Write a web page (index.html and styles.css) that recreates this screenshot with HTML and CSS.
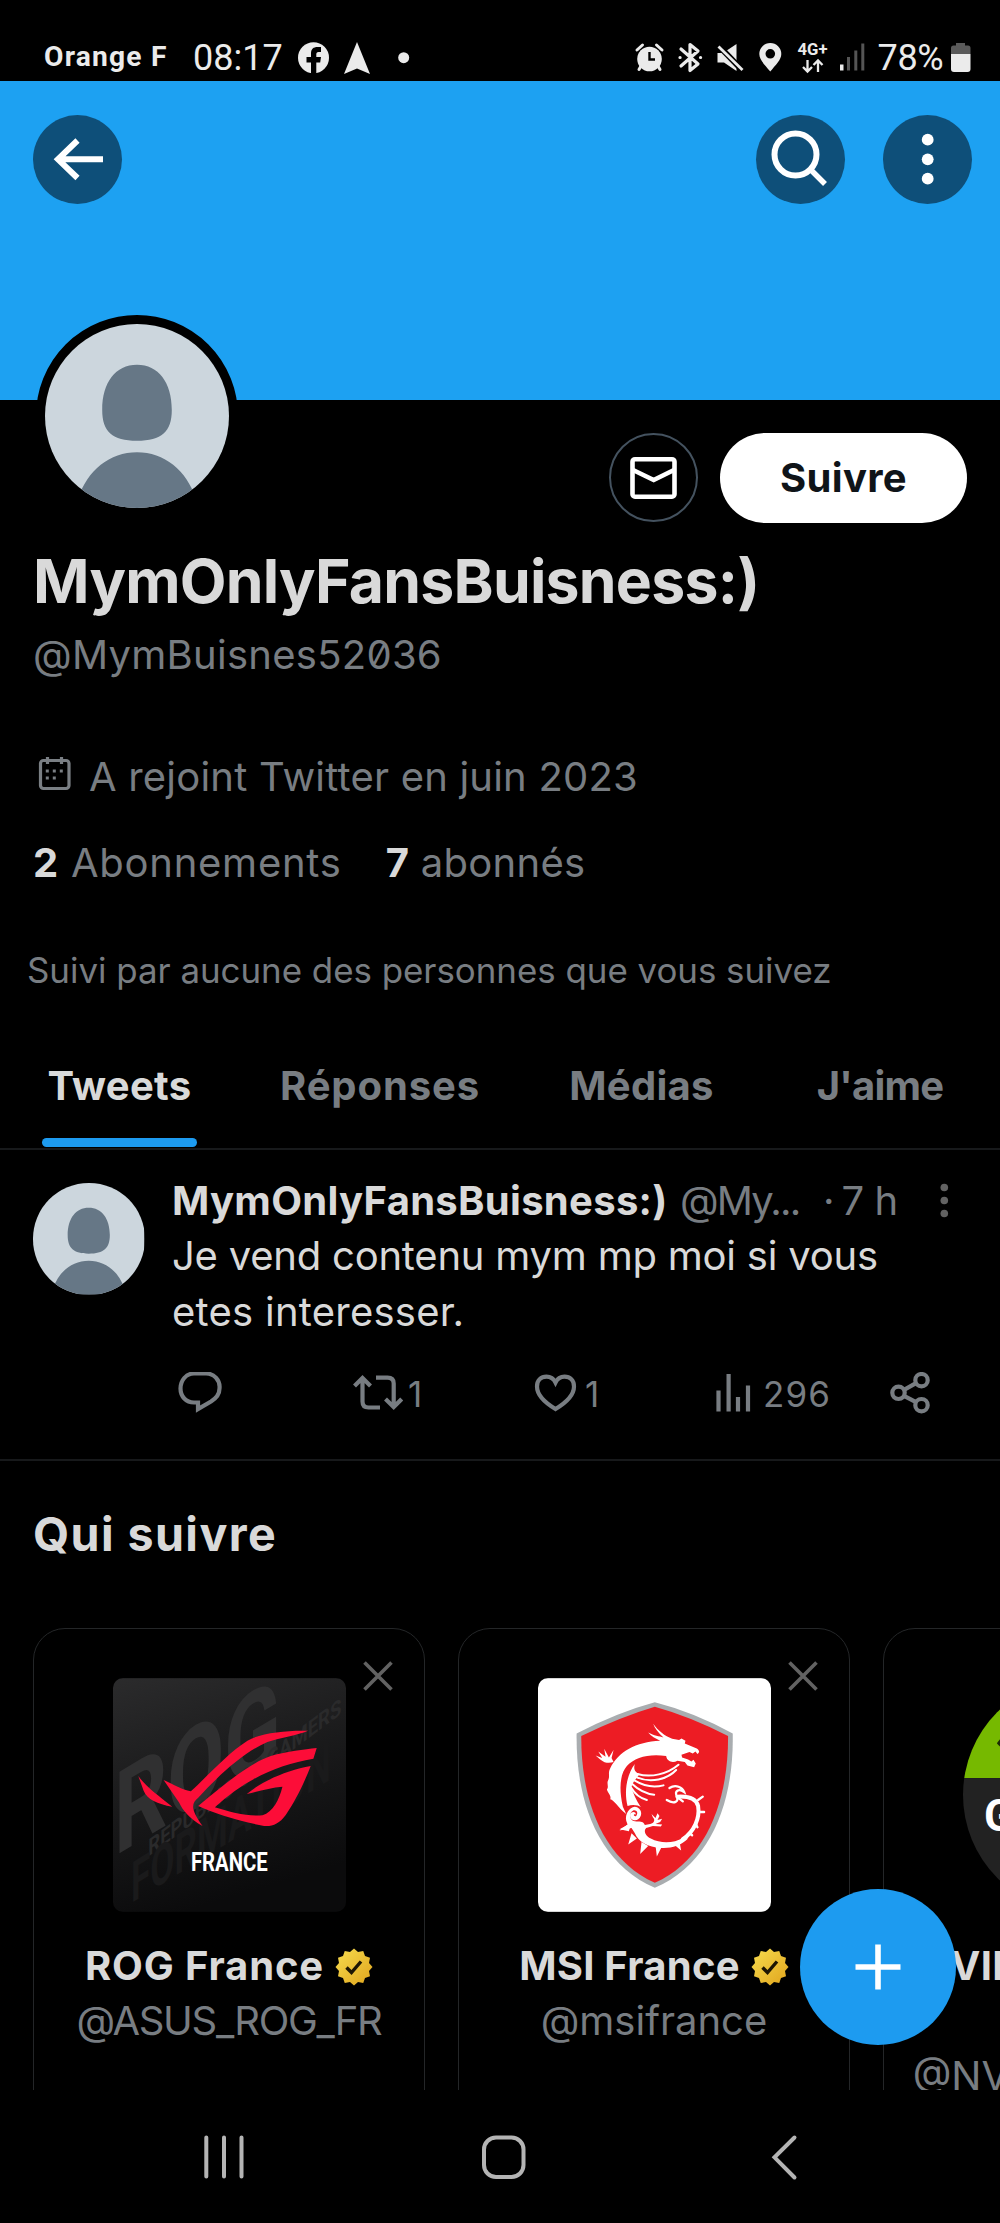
FILE: index.html
```html
<!DOCTYPE html>
<html lang="fr">
<head>
<meta charset="utf-8">
<title>MymOnlyFansBuisness:)</title>
<link rel="stylesheet" href="styles.css">
</head>
<body>
<svg class="defs" width="0" height="0" aria-hidden="true">
  <defs>
    <symbol id="person" viewBox="136 103 550 550">
      <rect x="136" y="103" width="550" height="550" fill="#ccd6dd"/>
      <path fill="#667786" d="M411 225C475 225 515 278 515 360C515 425 485 452 411 452C337 452 307 425 307 360C307 278 347 225 411 225ZM235 625C262 540 330 486 411 486C492 486 560 540 587 625V660H235Z"/>
    </symbol>
    <linearGradient id="gold" x1="0" y1="0" x2="1" y2="1">
      <stop offset="0" stop-color="#f6dc4f"/><stop offset="1" stop-color="#e0a41c"/>
    </linearGradient>
    <symbol id="verified" viewBox="-19 -19 38 38">
      <path fill="url(#gold)" d="M0 -18.500L4 -15L9.250 -16L11 -11L16 -9.250L15 -4L18.500 0L15 4L16 9.250L11 11L9.250 16L4 15L0 18.500L-4 15L-9.250 16L-11 11L-16 9.250L-15 4L-18.500 0L-15 -4L-16 -9.250L-11 -11L-9.250 -16L-4 -15Z"/>
      <path d="M-7.500 0.500L-2.500 5.500L7 -5.500" fill="none" stroke="#1d1503" stroke-width="3.400"/>
    </symbol>
    <symbol id="close" viewBox="0 0 30 30"><path d="M1.500 1.500L28.500 28.500M28.500 1.500L1.500 28.500" stroke="#626262" stroke-width="3.600" fill="none"/></symbol>
  </defs>
</svg>
<div class="screen">
  <header class="status">
    <span class="carrier">Orange F</span>
    <span class="clock">08:17</span>
    <svg class="apps" width="112" height="34" viewBox="298 41 112 34">
      <circle cx="313.500" cy="57.800" r="15.500" fill="#ebebeb"/>
      <path d="M311 74V62.500H306.500V57H311V53.500C311 49 313.500 47 317.500 47H321V52H318.500C316.800 52 316.300 53 316.300 54.300V57H321L320.200 62.500H316.300V74Z" fill="#000"/>
      <path d="M357 42L370 74L357 68.500L344 74Z" fill="#ebebeb"/>
      <circle cx="403.700" cy="57.700" r="5.500" fill="#ebebeb"/>
    </svg>
    <svg class="signals" width="234" height="34" viewBox="634 41 234 34">
      <g fill="#ebebeb" stroke="none">
        <circle cx="650.500" cy="59" r="12.300"/>
        <path d="M650.500 52V59.500H656" fill="none" stroke="#000" stroke-width="2.400"/>
        <path d="M638 50L643.500 45M657.500 45L663 50M642 66L640 69.500M659 66L661 69.500" stroke="#ebebeb" stroke-width="3" stroke-linecap="round"/>
        <path d="M682 49L699 64L691 70.500V44.500L699 51L682 66M681 57.500h.1M701.500 57.500h.1" fill="none" stroke="#ebebeb" stroke-width="3.200" stroke-linecap="round" stroke-linejoin="round"/>
        <path d="M718.500 53H724L737.500 44V71L725 62.500H718.500Z"/>
        <path d="M717.500 43.500L744 71" stroke="#000" stroke-width="6"/>
        <path d="M719.500 46.500L743.500 70" stroke="#ebebeb" stroke-width="2.800"/>
        <path d="M771.300 71.500C766 65 760.300 60 760.300 54A11 11 0 0 1 782.300 54C782.300 60 776.500 65 771.300 71.500ZM771.300 49A4.800 4.800 0 1 0 771.300 58.600A4.800 4.800 0 1 0 771.300 49Z" fill-rule="evenodd"/>
        <text x="798.500" y="55.300" class="net" textLength="30" lengthAdjust="spacingAndGlyphs">4G+</text>
        <path d="M808.500 60V71M804 67L808.500 71.500L813 67M819 72V61M814.500 65L819 60.500L823.500 65" fill="none" stroke="#ebebeb" stroke-width="2.300"/>
        <rect x="841" y="64.500" width="3.500" height="6"/>
        <path d="M848 57h3v13.500h-3zM855.300 50.500h3v20h-3zM862.300 43.500h3v27h-3z" fill="#555"/>
      </g>
    </svg>
    <span class="percent">78%</span>
    <svg class="battery" width="20" height="30" viewBox="952 43 20 30">
      <path d="M957 43H966V45.500H969Q971.500 45.500 971.500 48V54H952V48Q952 45.500 954.500 45.500H957Z" fill="#5a5a5a"/>
      <path d="M952 54H971.500V69Q971.500 72 968.500 72H955Q952 72 952 69Z" fill="#ebebeb"/>
    </svg>
  </header>

  <div class="banner">
    <button class="round">
      <svg width="89" height="89" viewBox="33 115 89 89"><path d="M103 159.300H58M77.500 140.500L58 159.300L77.500 178" fill="none" stroke="#fff" stroke-width="6"/></svg>
    </button>
    <button class="round search">
      <svg width="89" height="89" viewBox="755.500 115 89 89"><circle cx="795" cy="154.500" r="21" fill="none" stroke="#fff" stroke-width="6"/><path d="M810 169.500L824.500 184" stroke="#fff" stroke-width="5.500"/></svg>
    </button>
    <button class="round">
      <svg width="89" height="89" viewBox="883 115 89 89"><g fill="#fff"><circle cx="927.700" cy="139.700" r="5.900"/><circle cx="927.700" cy="159.300" r="5.900"/><circle cx="927.700" cy="178.700" r="5.900"/></g></svg>
    </button>
  </div>

  <section class="profile">
    <div class="profile-top">
      <svg class="portrait"><use href="#person"/></svg>
      <button class="mail">
        <svg width="48" height="44" viewBox="630 456 48 44"><rect x="632.500" y="459.200" width="42" height="37.500" rx="2.500" fill="none" stroke="#fff" stroke-width="4.600"/><path d="M633 470L653.700 480L674 470" fill="none" stroke="#fff" stroke-width="4.600"/></svg>
      </button>
      <button class="follow">Suivre</button>
    </div>
    <h1 class="name">MymOnlyFansBuisness:)</h1>
    <div class="handle">@MymBuisnes52036</div>
    <div class="joined">
      <svg width="33" height="36" viewBox="38 756 33 36"><g stroke="#7a7f84" stroke-width="3.200" fill="none"><rect x="40.500" y="760.500" width="28.500" height="28" rx="3"/><path d="M47.500 757v7M61.500 757v7"/></g><path d="M45.800 769.500h3v3h-3zM52.800 769.500h3v3h-3zM59.800 769.500h3v3h-3zM45.800 776.500h3v3h-3zM52.800 776.500h3v3h-3z" fill="#7a7f84"/></svg>
      <span>A rejoint Twitter en juin 2023</span>
    </div>
    <div class="stats"><span class="following"><b>2</b> Abonnements</span><span class="followers"><b>7</b> abonnés</span></div>
    <div class="mutual">Suivi par aucune des personnes que vous suivez</div>
  </section>

  <nav class="tabs">
    <a class="tab active">Tweets</a>
    <a class="tab wide">Réponses</a>
    <a class="tab">Médias</a>
    <a class="tab narrow">J'aime</a>
  </nav>

  <article class="tweet">
    <svg class="tweet-avatar"><use href="#person"/></svg>
    <div class="tweet-body">
      <div class="tweet-head">
        <b class="author">MymOnlyFansBuisness:)</b><span class="author-handle">@My...</span><span class="dot">·</span><span class="time">7 h</span>
        <svg class="more" width="10" height="36" viewBox="939 1180 10 36"><g fill="#626262"><circle cx="944.300" cy="1184.500" r="3.800"/><circle cx="944.300" cy="1197.500" r="3.800"/><circle cx="944.300" cy="1210.500" r="3.800"/></g></svg>
      </div>
      <p class="tweet-text">Je vend contenu mym mp moi si vous<br><span class="second">etes interesser.</span></p>
      <div class="actions">
        <span class="action"><svg width="44" height="44" viewBox="178 1371.500 44 44"><path d="M194 1373H206A13.500 13.500 0 0 1 219.500 1388C219.500 1395 215 1398.500 211 1401L198 1408.500V1402H194C186 1402 180.500 1396 180.500 1388C180.500 1380 186 1373 194 1373Z"/></svg></span>
        <span class="action"><svg width="50" height="44" viewBox="353 1371.500 50 44"><path d="M354.500 1385.500L362.500 1377.500L370.500 1385.500M362.500 1378V1401Q362.500 1407 368.500 1407H380M376 1377.200H387.500Q393.700 1377.200 393.700 1383V1406M385.500 1398.500L393.700 1406.500L401.700 1398.500"/></svg><span class="one">1</span></span>
        <span class="action"><svg width="43" height="44" viewBox="534 1371.500 43 44"><path d="M555.500 1408.500C548 1404 537 1396 537 1386C537 1380 541 1376.200 546.500 1376.200C551 1376.200 554 1379 555.500 1382C557 1379 560 1376.200 564.500 1376.200C570 1376.200 574 1380 574 1386C574 1396 563 1404 555.500 1408.500Z"/></svg><span class="one likes">1</span></span>
        <span class="action"><svg width="35" height="44" viewBox="716 1371.500 35 44"><path d="M718.500 1411V1390M728.600 1411V1373.500M738 1411V1396.500M748 1411V1385"/></svg><span class="views">296</span></span>
        <span class="action"><svg width="41" height="44" viewBox="890 1371.500 41 44"><circle cx="898.500" cy="1392.300" r="6.200"/><circle cx="921.500" cy="1379.700" r="6.200"/><circle cx="921.500" cy="1404.700" r="6.200"/><path d="M904 1389.300L916 1382.700M904 1395.300L916 1401.700"/></svg></span>
      </div>
    </div>
  </article>

  <section class="suggest">
    <h2>Qui suivre</h2>
    <div class="cards">
      <div class="card">
        <svg class="close"><use href="#close"/></svg>
        <svg class="logo" viewBox="6 24 700 702">
          <defs><linearGradient id="slate" x1="0" y1="0" x2="0.300" y2="1"><stop offset="0" stop-color="#2b2b2c"/><stop offset=".5" stop-color="#1a1a1b"/><stop offset="1" stop-color="#0b0b0c"/></linearGradient></defs>
          <rect x="6" y="24" width="700" height="702" fill="url(#slate)"/>
          <g class="ghost">
            <text transform="matrix(1 -.6 0 1.150 10 560)" font-size="300" textLength="500" lengthAdjust="spacingAndGlyphs" fill="#303031">ROG</text>
            <text transform="matrix(1 -.74 0 1 112 560)" font-size="70" textLength="580" lengthAdjust="spacingAndGlyphs" fill="#2a2a2b">REPUBLIC OF GAMERS</text>
            <text transform="matrix(1 -.62 0 1.300 60 700)" font-size="130" textLength="600" lengthAdjust="spacingAndGlyphs" fill="#1a1a1b">FORMATION</text>
          </g>
          <g fill="#fc0d38">
            <path d="M82 318C105 350 140 375 184 410C140 402 108 388 98 362Z"/>
            <path d="M158 330C190 345 212 358 240 364C290 318 350 250 410 212C450 188 530 180 592 182C560 196 510 202 470 216C400 246 330 310 262 383C240 400 240 420 275 468C235 445 215 420 205 398Z"/>
            <path d="M262 408C360 325 430 274 480 258C530 244 580 238 618 234L608 266C500 284 400 330 312 412C360 427 410 440 455 436C487 425 505 390 515 350C480 353 445 363 408 372C450 335 530 300 600 288C580 340 550 400 525 435C505 462 485 470 460 468C390 455 310 430 262 408Z"/>
          </g>
          <text x="240" y="603" class="country" textLength="231" lengthAdjust="spacingAndGlyphs">FRANCE</text>
        </svg>
        <div class="card-name rog">ROG France<svg class="badge"><use href="#verified"/></svg></div>
        <div class="card-handle asus">@ASUS_ROG_FR</div>
      </div>
      <div class="card">
        <svg class="close"><use href="#close"/></svg>
        <svg class="logo" viewBox="-69 -36 700 702">
          <rect x="-69" y="-36" width="700" height="702" fill="#fff"/>
          <path fill="#a9adb0" d="M282 36Q170 66 47 130C44 330 110 520 282 594C454 520 520 330 516 130Q400 66 282 36Z"/>
          <path fill="#ed1c24" d="M282 50Q180 80 61 138C60 330 125 508 282 579C439 508 503 330 502 138Q390 80 282 50Z"/>
          <g fill="#fff">
            <path d="M148 235C172 185 225 155 298 152C285 145 270 138 262 127C280 137 295 138 308 142C292 128 282 115 277 101C292 122 312 138 334 146L355 150L362 145L374 152L372 160L408 175C418 182 416 188 410 192L404 184L396 190L386 186L362 194L364 202L382 208L392 214L398 209L405 220L400 232L380 226L372 216L350 212C335 220 318 214 316 198C265 190 222 202 198 228C180 248 172 290 186 350L196 372C170 352 160 330 148 328C152 315 140 310 138 298C145 290 136 280 142 270C148 258 140 250 148 235Z"/>
            <path d="M222 222C200 250 188 300 200 348C215 343 232 345 240 352C226 330 216 310 212 290C216 275 230 262 236 252C226 248 216 240 222 222Z"/>
            <path d="M196 392C192 372 205 352 222 350C242 352 248 375 232 388C222 396 206 388 208 374C212 362 228 366 224 374C216 370 218 382 226 378C234 368 226 358 216 362C204 368 204 390 222 394C236 396 246 392 252 405L268 402C280 400 284 390 276 382L272 372L284 384L290 370L296 378L290 390L304 386L298 396L284 402L304 404L300 410L276 408L256 414C246 424 256 440 270 446C300 462 340 460 366 444L382 446C360 468 330 476 300 474C262 472 232 456 222 430L212 414L176 422L200 404Z"/>
            <path d="M176 418L212 398L204 424ZM202 464L212 430L228 446ZM238 492L242 456L262 468ZM288 500L284 466L304 468ZM361 482L338 462L356 454Z"/>
            <path d="M158 216C145 220 132 220 118 208L104 196L124 204L112 184L134 200L130 176L144 202L158 180L152 204Z"/>
          </g>
          <g fill="none" stroke="#fff" stroke-linecap="round">
            <path d="M230 252C270 264 320 252 353 224M228 262C270 280 320 268 346 240M222 272C255 292 285 292 308 286M214 282C235 302 260 312 280 314M210 292C222 312 240 326 258 330" stroke-width="6"/>
            <path d="M366 448C400 425 418 385 412 348C406 325 385 318 350 320" stroke-width="12"/>
            <path d="M412 330L426 320M416 366L430 366M406 404L410 412M386 430L394 436M326 294C345 282 365 292 370 306C355 296 340 300 348 320C356 334 340 344 318 330M348 320L366 334" stroke-width="7"/>
          </g>
        </svg>
        <div class="card-name msi">MSI France<svg class="badge"><use href="#verified"/></svg></div>
        <div class="card-handle">@msifrance</div>
      </div>
      <div class="card">
        <svg class="logo circle" viewBox="0 0 234 234">
          <rect width="234" height="100" fill="#76b900"/><rect y="100" width="234" height="134" fill="#222"/>
          <path d="M34 65C55 35 105 25 150 45V85C105 95 55 90 34 65Z" fill="#1b2a06"/>
          <path d="M55 63C80 42 110 42 130 60C105 82 80 80 55 63Z" fill="#76b900"/>
          <text x="21" y="153" class="geforce" textLength="190" lengthAdjust="spacingAndGlyphs">GEFORCE</text>
        </svg>
        <div class="card-name geforce-name">NVIDIA GeForce<br>France</div>
        <div class="card-handle">@NVIDIAGeForce</div>
      </div>
    </div>
  </section>

  <footer class="system">
    <svg width="1000" height="60" viewBox="0 2127 1000 60"><g fill="none" stroke="#b4b4b4" stroke-linecap="round" stroke-width="4"><path d="M206.300 2137.500V2176.500M224 2137.500V2176.500M241.500 2137.500V2176.500"/><rect x="484" y="2137.500" width="39.500" height="39.500" rx="12"/><path d="M794.500 2137.500L774.500 2157.300L794.500 2177.500"/></g></svg>
  </footer>

  <button class="compose"><svg width="46" height="46" viewBox="0 0 46 46"><path d="M23 0.500V45.500M0.500 23H45.500" stroke="#fff" stroke-width="5.600"/></svg></button>
</div>
</body>
</html>
```
FILE: styles.css
```css
* { box-sizing: border-box; }
:root { --grey: #787d82; }
body { margin: 0; background: #000; color: #d9d9d9; font-family: Inter, sans-serif; font-size: 40px; }
button { border: 0; padding: 0; margin: 0; font: inherit; }
svg { display: block; flex: none; }
.defs { position: absolute; }
.screen { position: relative; width: 1000px; height: 2223px; overflow: hidden; display: flex; flex-direction: column; white-space: nowrap; }

.status { height: 81px; flex: none; padding: 34px 0 0 44px; display: flex; align-items: center; color: #ebebeb; font-family: Roboto, sans-serif; }
.carrier { width: 149px; font: bold 28.2px/47px Roboto, sans-serif; letter-spacing: 1.2px; padding-bottom: 3px; }
.clock { width: 105px; font-size: 36px; line-height: 48px; }
.signals { margin-left: 222.500px; }
.net { font: bold 16px Roboto, sans-serif; }
.percent { width: 73px; margin-left: 11px; font-size: 36px; line-height: 48px; letter-spacing: -0.3px; }

.banner { height: 319px; flex: none; background: #1da1f2; padding: 34px 28px 0 33px; display: flex; gap: 38.5px; }
.round { width: 89px; height: 89px; border-radius: 50%; background: #0e4f79; overflow: hidden; }
.search { margin-left: auto; }

.profile { flex: none; padding: 33px 33px 0; line-height: 77px; }
.profile-top { height: 90px; display: flex; align-items: flex-start; }
.portrait { width: 202px; height: 202px; margin: -118.5px auto 0 3px; border: 9.5px solid #000; border-radius: 50%; background: #000; }
.mail { width: 89px; height: 89px; margin-right: 22px; border: 2.5px solid #44525f; border-radius: 50%; background: #000; display: flex; align-items: center; justify-content: center; }
.follow { width: 247px; height: 89.5px; border-radius: 45px; background: #fff; color: #0f1419; font-weight: 700; line-height: 90px; letter-spacing: 0.3px; }
.name { margin: 18px 0 0; font-size: 60.7px; line-height: 80px; letter-spacing: -0.77px; font-weight: 700; }
.handle { line-height: 67px; letter-spacing: 0.27px; color: var(--grey); font-feature-settings: "zero"; }
.joined { margin-top: 50px; padding-left: 5px; display: flex; align-items: center; gap: 18px; letter-spacing: 0.2px; color: var(--grey); }
.joined svg { margin-top: -5px; }
.stats { line-height: 95px; color: var(--grey); display: flex; gap: 44px; }
.stats b { color: #d9d9d9; }
.following { letter-spacing: 0.75px; }
.followers { letter-spacing: 0.3px; }
.mutual { margin-left: -6px; font-size: 34.9px; line-height: 121px; letter-spacing: -0.02px; color: var(--grey); }

.tabs { height: 119px; flex: none; padding-left: 42px; display: grid; grid-template-columns: 155px 208px 157px 162px; column-gap: 79px; border-bottom: 2px solid #17191b; text-align: center; font-weight: 700; line-height: 109px; color: var(--grey); }
.tab { letter-spacing: 0.3px; }
.tab.active { color: #d9d9d9; display: flex; flex-direction: column; }
.tab.active::after { content: ""; height: 9px; margin-top: -2px; border-radius: 4.5px; background: #1d9bf0; }
.tab.wide { letter-spacing: 0.9px; }
.tab.narrow { letter-spacing: -0.8px; }

.tweet { height: 311px; flex: none; padding: 23px 51px 0 33px; display: flex; border-bottom: 2px solid #17191b; }
.tweet-avatar { width: 111.500px; height: 111.500px; margin: 10px 27.5px 0 0; border-radius: 50%; }
.tweet-body { flex: 1; }
.tweet-head { height: 55px; line-height: 55px; display: flex; align-items: center; color: var(--grey); }
.author { width: 508px; color: #d9d9d9; letter-spacing: 0.3px; }
.author-handle { width: 143px; letter-spacing: -1.8px; }
.dot { width: 18.5px; }
.time { letter-spacing: -0.5px; }
.more { margin-left: auto; }
.tweet-text { margin: 0; line-height: 56px; letter-spacing: -0.22px; }
.second { letter-spacing: 0.25px; }
.actions { height: 108px; padding-left: 6px; display: grid; grid-template-columns: 175px 181px 182px 174px auto; color: var(--grey); font-size: 35px; }
.action { display: flex; align-items: center; }
.action svg { fill: none; stroke: var(--grey); stroke-width: 4.2px; }
.one { margin-left: 5px; }
.likes { margin-left: 8px; }
.views { margin-left: 12px; letter-spacing: 1.1px; }

.suggest { height: 629px; flex: none; overflow: hidden; }
.suggest h2 { margin: 0; padding-left: 33px; font-size: 46.6px; line-height: 146px; letter-spacing: 1.4px; }
.cards { padding: 21px 0 0 33px; display: flex; gap: 33px; }
.card { position: relative; width: 392px; height: 560px; flex: none; padding-top: 49px; border: 1.5px solid #242628; border-radius: 32px; text-align: center; line-height: 55px; }
.close { position: absolute; top: 32px; right: 31px; width: 30px; height: 30px; }
.logo { width: 233px; height: 234px; margin: 0 auto 26px; border-radius: 10px; }
.circle { border-radius: 50%; }
.ghost, .country, .geforce { font-family: Roboto, sans-serif; font-weight: 700; }
.country { font-size: 80px; fill: #fff; }
.geforce { font-size: 44px; fill: #fff; }
.card-name { font-weight: 700; display: flow-root; }
.badge { display: inline-block; width: 38px; height: 38px; margin-left: 11px; vertical-align: -6px; }
.rog { letter-spacing: 0.85px; }
.msi { letter-spacing: 0.24px; }
.geforce-name { letter-spacing: 0.3px; }
.card-handle { color: var(--grey); }
.asus { letter-spacing: -1.3px; }

.system { height: 133px; flex: none; display: flex; align-items: center; }
.compose { position: absolute; left: 799.5px; top: 1889px; width: 156px; height: 156px; border-radius: 50%; background: #1d9bf0; display: flex; align-items: center; justify-content: center; }
```
